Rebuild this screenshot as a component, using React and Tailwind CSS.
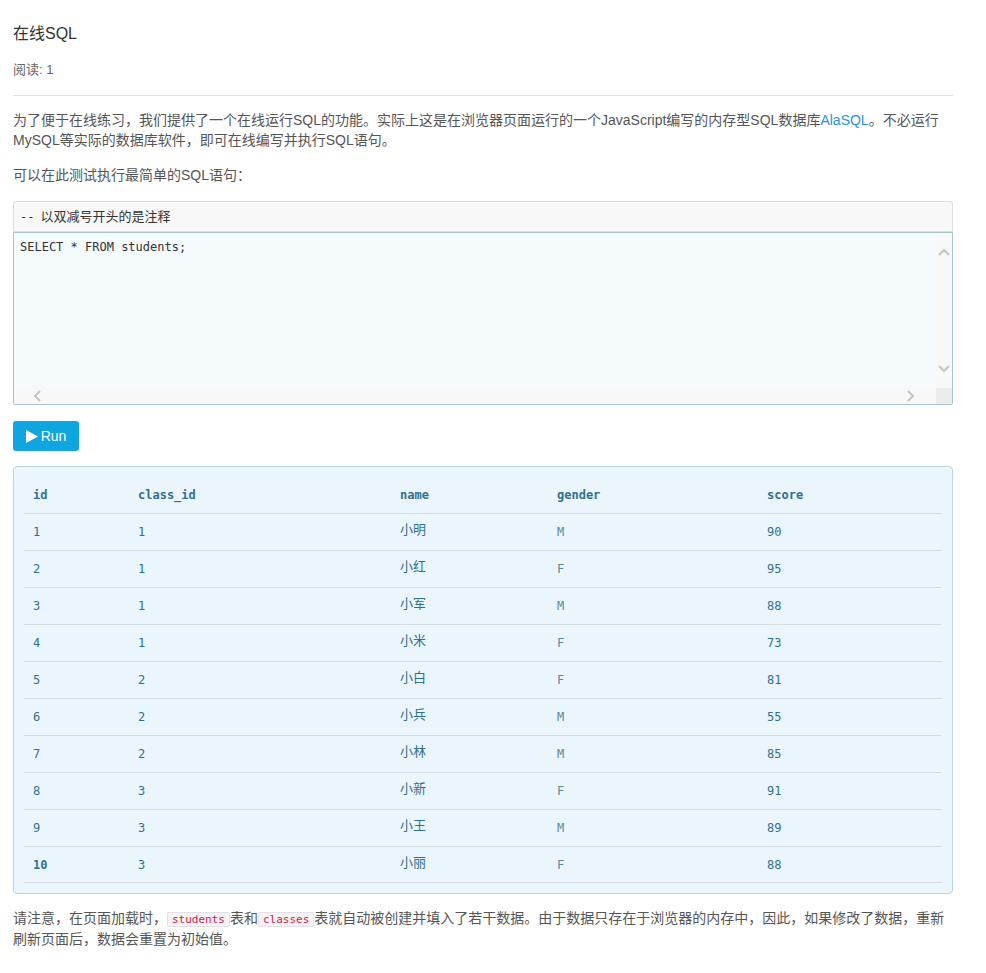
import React from "react";

const rows = [
  [1, 1, "小明", "M", 90],
  [2, 1, "小红", "F", 95],
  [3, 1, "小军", "M", 88],
  [4, 1, "小米", "F", 73],
  [5, 2, "小白", "F", 81],
  [6, 2, "小兵", "M", 55],
  [7, 2, "小林", "M", 85],
  [8, 3, "小新", "F", 91],
  [9, 3, "小王", "M", 89],
  [10, 3, "小丽", "F", 88],
];

const sans = "font-['Liberation_Sans','Noto_Sans_CJK_SC',sans-serif]";
const mono = "font-['DejaVu_Sans_Mono','Noto_Sans_CJK_SC',monospace]";

function Chevron({ dir }) {
  const d = {
    up: "M2 8 L7 3 L12 8",
    down: "M2 3 L7 8 L12 3",
    left: "M8 2 L3 7 L8 12",
    right: "M3 2 L8 7 L3 12",
  }[dir];
  const vb = dir === "up" || dir === "down" ? "0 0 14 11" : "0 0 11 14";
  const w = dir === "up" || dir === "down" ? 14 : 11;
  const h = dir === "up" || dir === "down" ? 11 : 14;
  return (
    <svg width={w} height={h} viewBox={vb} fill="none" stroke="#c4c4c4" strokeWidth="2">
      <path d={d} />
    </svg>
  );
}

export default function App() {
  return (
    <div className={`${sans} bg-white w-[986px] min-h-[973px] text-[#555]`}>
      <div className="ml-[13px] w-[940px] pt-[23px]">
        <h1 className="text-[16px] leading-[22px] text-[#333]">在线SQL</h1>
        <div className="mt-[16px] text-[13px] leading-[18px] text-[#666]">阅读: 1</div>
        <div className="mt-[16px] h-px bg-[#e0e0e0]" />
        <p className="mt-[14px] text-[14px] leading-[20px] text-[#555]">
          为了便于在线练习，我们提供了一个在线运行SQL的功能。实际上这是在浏览器页面运行的一个JavaScript编写的内存型SQL数据库
          <span className="text-[#2a94d6]">AlaSQL</span>
          。不必运行MySQL等实际的数据库软件，即可在线编写并执行SQL语句。
        </p>
        <p className="mt-[15px] text-[14px] leading-[20px]">可以在此测试执行最简单的SQL语句：</p>

        <div className="mt-[16px]">
          <div className="h-[31px] border border-[#dddddd] bg-[#f8f8f8] rounded-t-[3px] pl-[6px] flex items-center text-[13px] text-[#333]">
            <span className={mono + " text-[12px] mr-[6px]"}>--</span>
            <span>以双减号开头的是注释</span>
          </div>
          <div className="h-[173px] border border-[#a8c4cd] bg-[#f5fafd] flex flex-col rounded-b-[2px]">
            <div className="flex flex-1 min-h-0">
              <div className={`${mono} flex-1 pl-[6px] pt-[7px] text-[12px] leading-[14px] text-[#333]`}>
                SELECT * FROM students;
              </div>
              <div className="w-[16px] bg-[#f8f8f8] flex flex-col items-center justify-between py-[14px]">
                <Chevron dir="up" />
                <Chevron dir="down" />
              </div>
            </div>
            <div className="h-[16px] flex">
              <div className="flex-1 bg-[#f8f8f8] flex items-center justify-between pl-[18px] pr-[20px]">
                <Chevron dir="left" />
                <Chevron dir="right" />
              </div>
              <div className="w-[16px] bg-[#ececec]" />
            </div>
          </div>
        </div>

        <button className="mt-[16px] h-[30px] w-[66px] rounded-[3px] bg-[#0ea5e0] text-white text-[14px] flex items-center justify-center gap-[3px]">
          <svg width="12" height="13" viewBox="0 0 12 13">
            <path d="M0 0 L12 6.5 L0 13 Z" fill="white" />
          </svg>
          <span>Run</span>
        </button>

        <div className="mt-[15px] border border-[#b9d6e3] bg-[#eaf5fc] rounded-[4px] px-[10px] pt-[9px] pb-[10px] text-[#31708f]">
          <div className={`${mono} grid grid-cols-[105px_262px_157px_210px_184px] h-[37px] items-center text-[12px] font-bold`}>
            <div className="pl-[9px]">id</div>
            <div className="pl-[9px]">class_id</div>
            <div className="pl-[9px]">name</div>
            <div className="pl-[9px]">gender</div>
            <div className="pl-[9px]">score</div>
          </div>
          {rows.map((r, i) => (
            <div
              key={i}
              className={`grid grid-cols-[105px_262px_157px_210px_184px] h-[37px] items-center border-t border-[#d4dde2] ${i === rows.length - 1 ? "border-b" : ""}`}
            >
              <div className={`${mono} pl-[9px] text-[12px] ${r[0] === 10 ? "font-bold" : ""}`}>{r[0]}</div>
              <div className={`${mono} pl-[9px] text-[12px]`}>{r[1]}</div>
              <div className="pl-[9px] text-[13px] -mt-[4px]">{r[2]}</div>
              <div className={`${mono} pl-[9px] text-[12px] text-[#5a8aa3]`}>{r[3]}</div>
              <div className={`${mono} pl-[9px] text-[12px]`}>{r[4]}</div>
            </div>
          ))}
        </div>

        <p className="mt-[14px] text-[14px] leading-[21px]">
          请注意，在页面加载时，
          <code className={`${mono} text-[11px] leading-[14px] text-[#c7254e] bg-[#f9f2f4] border border-[#e1e1e8] rounded-[2px] px-[4px]`}>students</code>
          表和
          <code className={`${mono} text-[11px] leading-[14px] text-[#c7254e] bg-[#f9f2f4] border border-[#e1e1e8] rounded-[2px] px-[4px]`}>classes</code>
          表就自动被创建并填入了若干数据。由于数据只存在于浏览器的内存中，因此，如果修改了数据，重新刷新页面后，数据会重置为初始值。
        </p>
      </div>
    </div>
  );
}
